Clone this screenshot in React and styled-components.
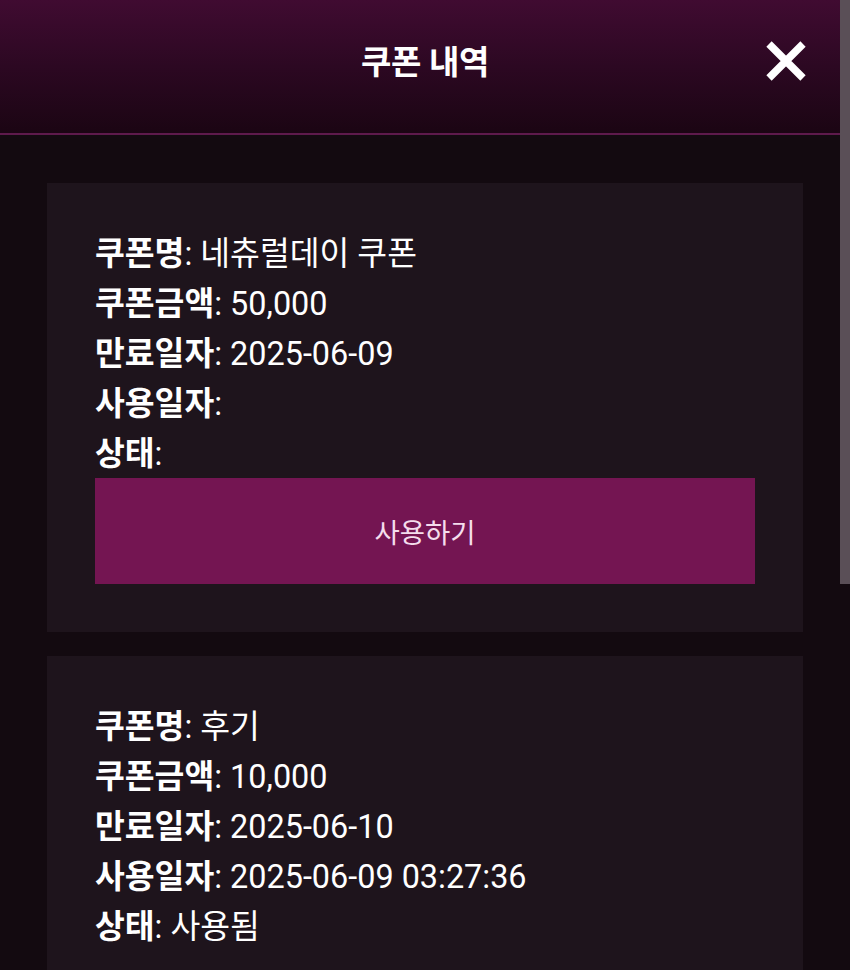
import React from "react";
import styled, { createGlobalStyle } from "styled-components";

const Global = createGlobalStyle`
  html, body { margin: 0; padding: 0; background: #130a10; }
  body { font-family: Roboto, "Noto Sans CJK KR", sans-serif; color: #ffffff; overflow: hidden; }
  * { box-sizing: border-box; }
`;

const Page = styled.div`
  min-height: 970px;
  background: #130a10;
`;

const Header = styled.header`
  height: 135px;
  display: grid;
  grid-template-columns: 1fr auto 1fr;
  align-items: center;
  padding-bottom: 14px;
  background: linear-gradient(to bottom, #400b31 0%, #2c0822 50%, #1b0513 100%);
  border-bottom: 2px solid #5e1a4c;
`;

const Title = styled.h1`
  grid-column: 2;
  margin: 0;
  font-size: 33px;
  font-weight: 700;
  letter-spacing: -0.3px;
  color: #ffffff;
`;

const CloseButton = styled.button`
  grid-column: 3;
  justify-self: end;
  margin-right: 42px;
  margin-top: 2px;
  width: 44px;
  height: 44px;
  padding: 0;
  border: 0;
  background: transparent;
  display: flex;
  align-items: center;
  justify-content: center;
  cursor: pointer;
`;

const List = styled.main`
  display: flex;
  flex-direction: column;
  gap: 24px;
  padding: 48px 47px;
`;

const Card = styled.section`
  background: #1e141c;
  padding: 46px 48px 48px;
`;

const Row = styled.div`
  font-size: 32.4px;
  line-height: 50px;
  color: #ffffff;
  white-space: nowrap;
`;

const Label = styled.span`
  font-weight: 700;
`;

const UseButton = styled.button`
  display: block;
  width: 100%;
  height: 106px;
  margin-top: -1px;
  border: 0;
  background: #741552;
  color: #f4dded;
  font-family: Roboto, "Noto Sans CJK KR", sans-serif;
  font-size: 27.5px;
  cursor: pointer;
`;

const ScrollThumb = styled.div`
  position: fixed;
  top: 0;
  right: 0;
  width: 10px;
  height: 584px;
  background: #5a4f57;
`;

const coupons = [
  { name: "네츄럴데이 쿠폰", amount: "50,000", expire: "2025-06-09", used: "", status: "", usable: true },
  { name: "후기", amount: "10,000", expire: "2025-06-10", used: "2025-06-09 03:27:36", status: "사용됨", usable: false },
];

function Field({ label, value }) {
  return (
    <Row>
      <Label>{label}</Label>: {value}
    </Row>
  );
}

export default function App() {
  return (
    <Page>
      <Global />
      <Header>
        <Title>쿠폰 내역</Title>
        <CloseButton aria-label="닫기">
          <svg width="42" height="42" viewBox="0 0 42 42">
            <path d="M4 4 L38 38 M38 4 L4 38" stroke="#ffffff" strokeWidth="7.5" strokeLinecap="butt" fill="none" />
          </svg>
        </CloseButton>
      </Header>
      <List>
        {coupons.map((c, i) => (
          <Card key={i}>
            <Field label="쿠폰명" value={c.name} />
            <Field label="쿠폰금액" value={c.amount} />
            <Field label="만료일자" value={c.expire} />
            <Field label="사용일자" value={c.used} />
            <Field label="상태" value={c.status} />
            {c.usable && <UseButton>사용하기</UseButton>}
          </Card>
        ))}
      </List>
      <ScrollThumb />
    </Page>
  );
}
